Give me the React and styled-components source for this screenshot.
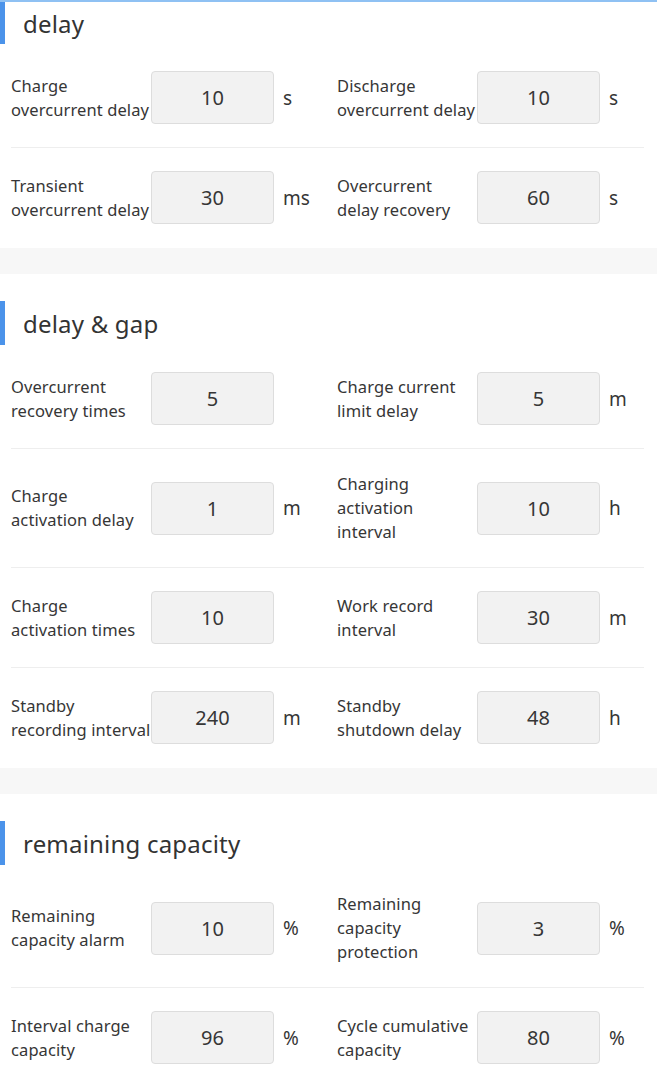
import React from "react";
import styled, { createGlobalStyle } from "styled-components";

const Global = createGlobalStyle`
  html, body { margin: 0; padding: 0; background: #ffffff; }
  body { font-family: "Noto Sans", "Liberation Sans", sans-serif; color: #333333; }
  * { box-sizing: border-box; }
`;

const Page = styled.div`
  width: 657px;
  background: #ffffff;
`;

const TopLine = styled.div`
  height: 2px;
  background: #8fc1f3;
`;

const Section = styled.section`
  background: #ffffff;
`;

const Band = styled.div`
  height: 26px;
  background: #f7f7f7;
`;

const Header = styled.div`
  display: flex;
  align-items: center;
  height: ${(p) => (p.$first ? 42 : 44)}px;
  margin: ${(p) => (p.$first ? "0 0 4px" : "27px 0 4px")};
  border-left: 5px solid #4b93ea;
  padding-left: 18px;
  font-size: 24px;
  color: #333333;
  letter-spacing: 0.2px;
`;

const Row = styled.div`
  display: grid;
  grid-template-columns: 326px 1fr;
  margin: 0 13px 0 11px;
  padding: 23px 0 23px;
  border-bottom: 1px solid ${(p) => (p.$last ? "transparent" : "#eeeeee")};
`;

const Field = styled.div`
  display: flex;
  align-items: center;
`;

const Label = styled.div`
  width: 140px;
  flex: none;
  font-size: 16.5px;
  line-height: 24px;
  color: #363636;
  letter-spacing: 0.1px;
  white-space: pre;
`;

const Input = styled.div`
  width: 123px;
  height: 53px;
  flex: none;
  display: flex;
  align-items: center;
  justify-content: center;
  background: #f2f2f2;
  border: 1px solid #dddddd;
  border-radius: 4px;
  font-size: 20px;
  color: #363636;
`;

const Unit = styled.div`
  margin-left: 9px;
  font-size: 19px;
  color: #363636;
`;

const sections = [
  {
    title: "delay",
    rows: [
      [
        ["Charge\novercurrent delay", "10", "s"],
        ["Discharge\novercurrent delay", "10", "s"],
      ],
      [
        ["Transient\novercurrent delay", "30", "ms"],
        ["Overcurrent\ndelay recovery", "60", "s"],
      ],
    ],
  },
  {
    title: "delay & gap",
    rows: [
      [
        ["Overcurrent\nrecovery times", "5", ""],
        ["Charge current\nlimit delay", "5", "m"],
      ],
      [
        ["Charge\nactivation delay", "1", "m"],
        ["Charging\nactivation\ninterval", "10", "h"],
      ],
      [
        ["Charge\nactivation times", "10", ""],
        ["Work record\ninterval", "30", "m"],
      ],
      [
        ["Standby\nrecording interval", "240", "m"],
        ["Standby\nshutdown delay", "48", "h"],
      ],
    ],
  },
  {
    title: "remaining capacity",
    rows: [
      [
        ["Remaining\ncapacity alarm", "10", "%"],
        ["Remaining\ncapacity\nprotection", "3", "%"],
      ],
      [
        ["Interval charge\ncapacity", "96", "%"],
        ["Cycle cumulative\ncapacity", "80", "%"],
      ],
    ],
  },
];

export default function App() {
  return (
    <Page>
      <Global />
      <TopLine />
      {sections.map((s, si) => (
        <React.Fragment key={s.title}>
          {si > 0 && <Band />}
          <Section>
            <Header $first={si === 0}>{s.title}</Header>
            {s.rows.map((r, ri) => (
              <Row key={ri} $last={ri === s.rows.length - 1}>
                {r.map(([label, value, unit]) => (
                  <Field key={label}>
                    <Label>{label}</Label>
                    <Input>{value}</Input>
                    {unit && <Unit>{unit}</Unit>}
                  </Field>
                ))}
              </Row>
            ))}
          </Section>
        </React.Fragment>
      ))}
    </Page>
  );
}
